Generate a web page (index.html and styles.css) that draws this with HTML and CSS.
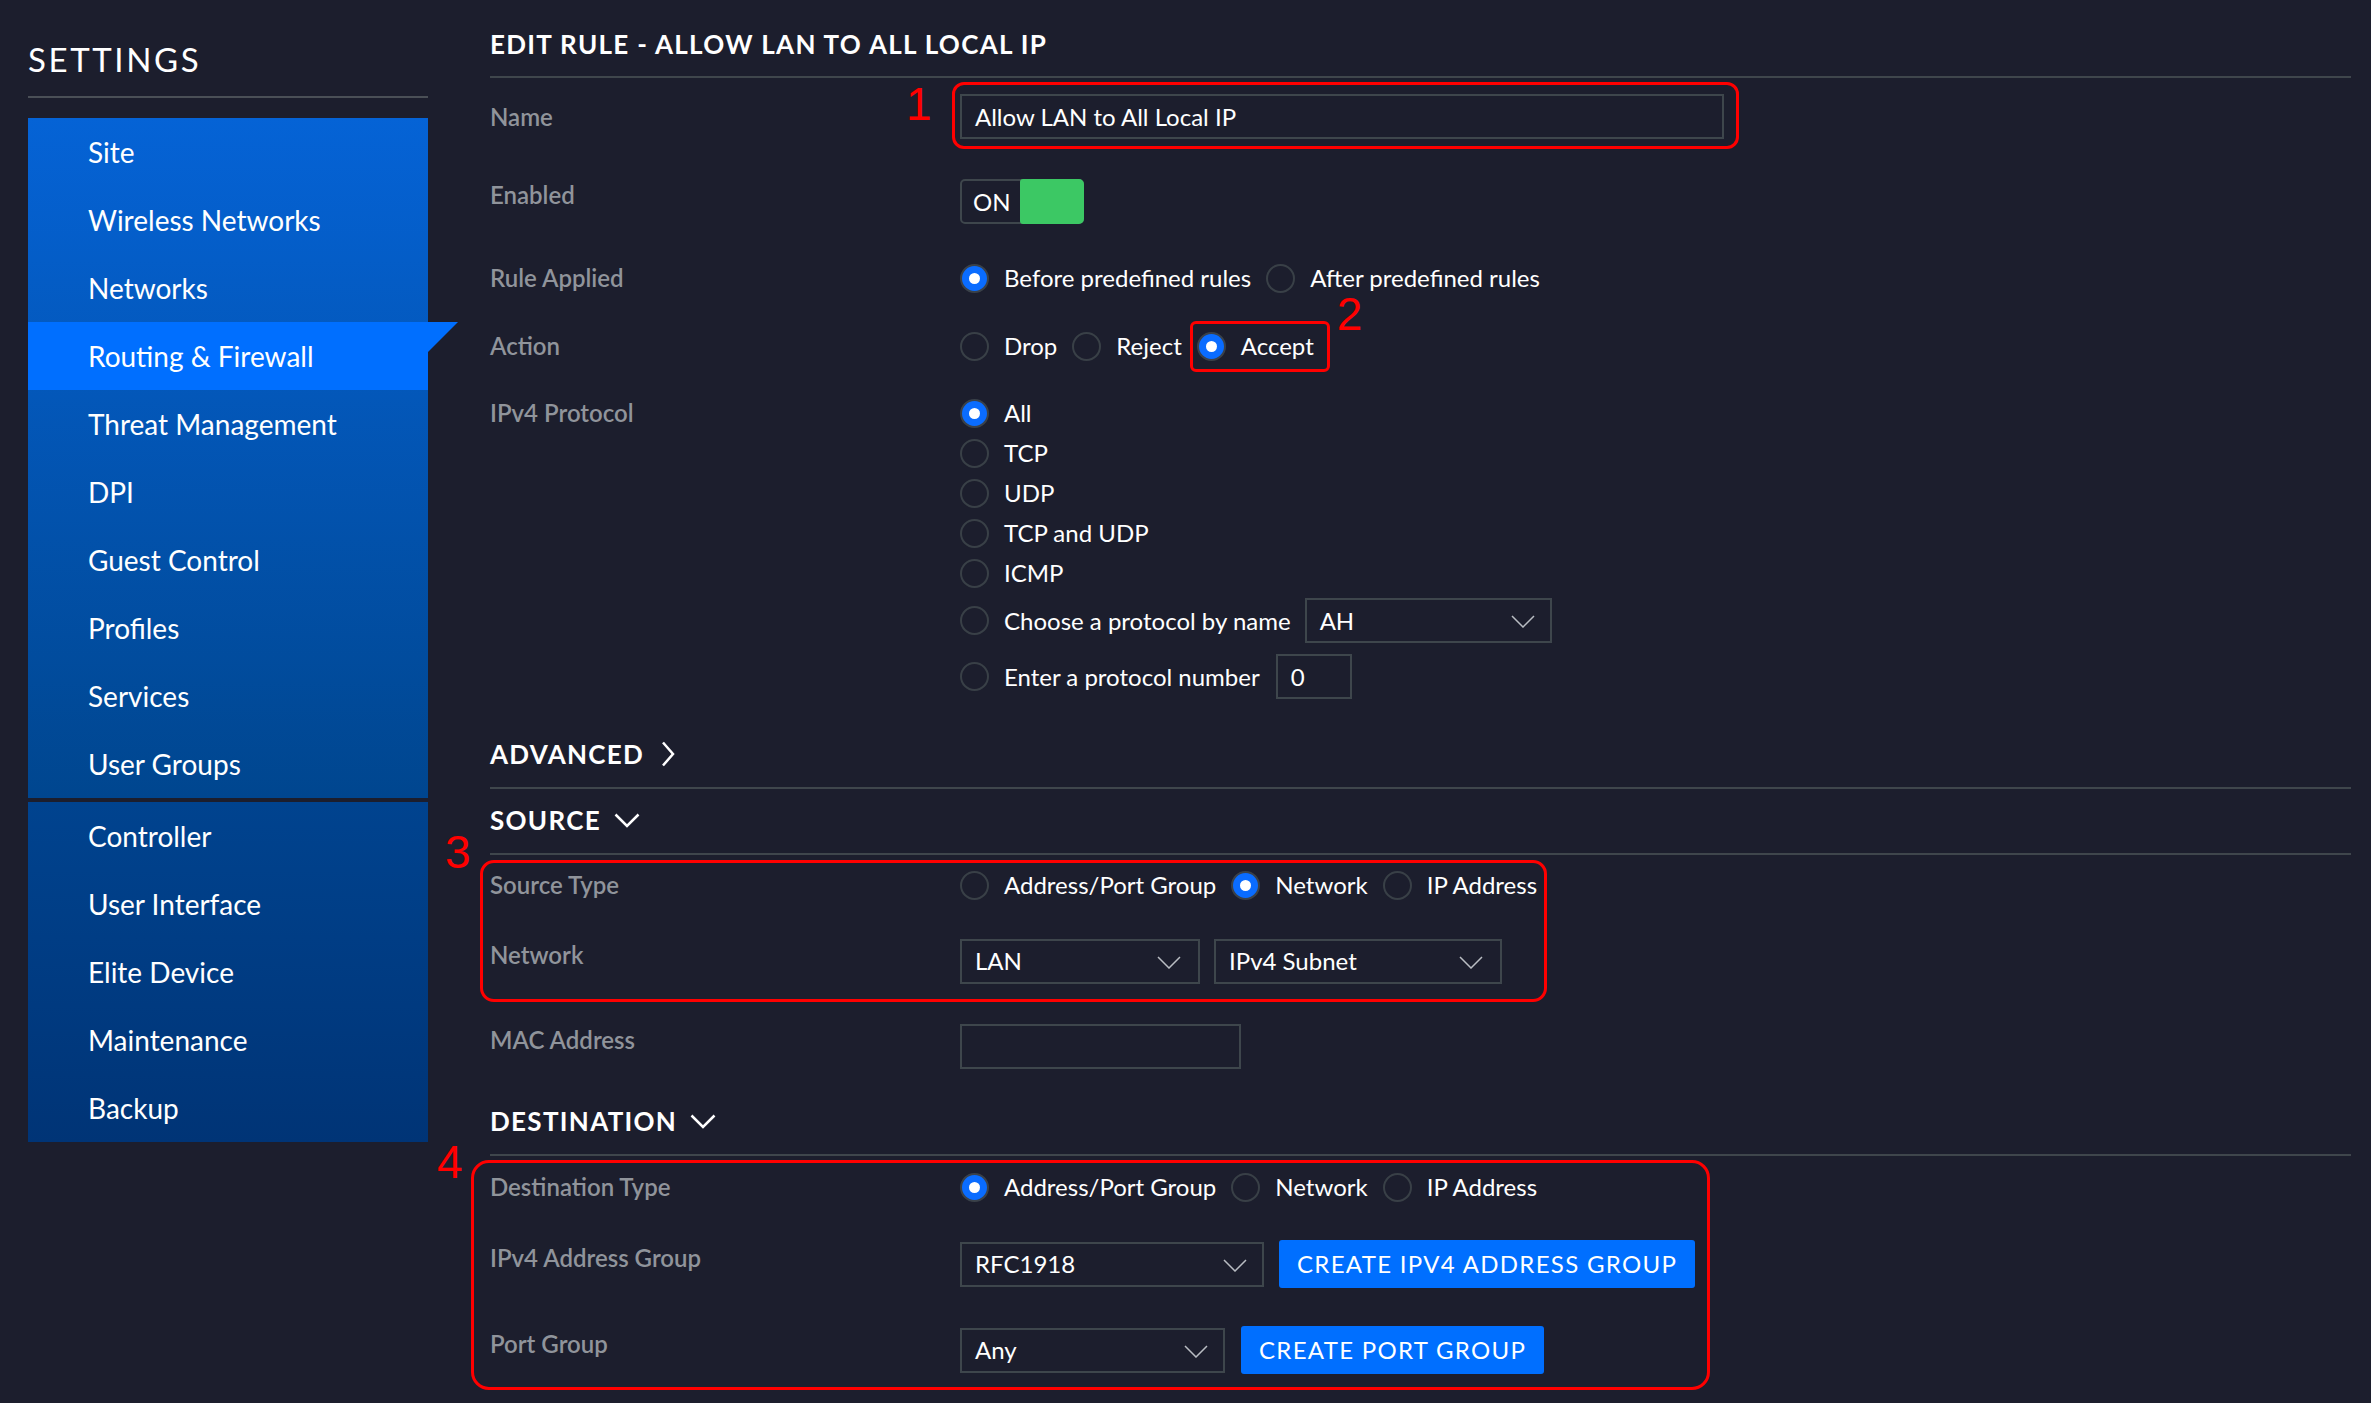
FILE: index.html
```html
<!DOCTYPE html>
<html lang="en">
<head>
<meta charset="utf-8">
<title>Settings - Edit Rule</title>
<link rel="stylesheet" href="styles.css">
</head>
<body>
<div class="app">
  <aside class="sidebar">
    <div class="sidebar-title">SETTINGS</div>
    <nav class="menu">
      <ul class="menu-group group-a">
        <li class="menu-item">Site</li>
        <li class="menu-item">Wireless Networks</li>
        <li class="menu-item">Networks</li>
        <li class="menu-item active">Routing &amp; Firewall</li>
        <li class="menu-item">Threat Management</li>
        <li class="menu-item">DPI</li>
        <li class="menu-item">Guest Control</li>
        <li class="menu-item">Profiles</li>
        <li class="menu-item">Services</li>
        <li class="menu-item">User Groups</li>
      </ul>
      <ul class="menu-group group-b">
        <li class="menu-item">Controller</li>
        <li class="menu-item">User Interface</li>
        <li class="menu-item">Elite Device</li>
        <li class="menu-item">Maintenance</li>
        <li class="menu-item">Backup</li>
      </ul>
    </nav>
  </aside>

  <main class="content">
    <h1 class="page-title">EDIT RULE - ALLOW LAN TO ALL LOCAL IP</h1>

    <div class="row row-name">
      <div class="label">Name</div>
      <div class="control">
        <div class="field field-name anno anno-name">Allow LAN to All Local IP<span class="anno-num num-1">1</span></div>
      </div>
    </div>

    <div class="row row-enabled">
      <div class="label label-lift">Enabled</div>
      <div class="control">
        <div class="toggle"><span class="toggle-text">ON</span><span class="toggle-knob"></span></div>
      </div>
    </div>

    <div class="row row-rule">
      <div class="label">Rule Applied</div>
      <div class="control options">
        <span class="opt"><span class="radio checked"></span>Before predefined rules</span>
        <span class="opt"><span class="radio"></span>After predefined rules</span>
      </div>
    </div>

    <div class="row row-action">
      <div class="label">Action</div>
      <div class="control options">
        <span class="opt"><span class="radio"></span>Drop</span>
        <span class="opt"><span class="radio"></span>Reject</span>
        <span class="opt anno anno-accept"><span class="radio checked"></span>Accept<span class="anno-num num-2">2</span></span>
      </div>
    </div>

    <div class="row row-protocol">
      <div class="label">IPv4 Protocol</div>
      <div class="control proto-list">
        <span class="opt"><span class="radio checked"></span>All</span>
        <span class="opt"><span class="radio"></span>TCP</span>
        <span class="opt"><span class="radio"></span>UDP</span>
        <span class="opt"><span class="radio"></span>TCP and UDP</span>
        <span class="opt"><span class="radio"></span>ICMP</span>
        <div class="proto-line proto-by-name">
          <span class="opt"><span class="radio"></span>Choose a protocol by name</span>
          <div class="select select-ah"><span>AH</span><svg class="chev" width="24" height="13" viewBox="0 0 24 13"><path d="M1 1 L12 12 L23 1" /></svg></div>
        </div>
        <div class="proto-line proto-by-number">
          <span class="opt"><span class="radio"></span>Enter a protocol number</span>
          <div class="field field-num">0</div>
        </div>
      </div>
    </div>

    <div class="section-head head-advanced">ADVANCED<svg class="head-chev" width="18" height="26" viewBox="0 0 18 26"><path d="M6 1.5 L16 13 L6 24.5" /></svg></div>

    <div class="section-head head-source">SOURCE<svg class="head-chev" width="26" height="15" viewBox="0 0 26 15"><path d="M1.5 1.5 L13 13 L24.5 1.5" /></svg></div>

    <div class="anno anno-group anno-source">
      <span class="anno-num num-3">3</span>
      <div class="row">
        <div class="label">Source Type</div>
        <div class="control options">
          <span class="opt"><span class="radio"></span>Address/Port Group</span>
          <span class="opt"><span class="radio checked"></span>Network</span>
          <span class="opt"><span class="radio"></span>IP Address</span>
        </div>
      </div>
      <div class="row row-network">
        <div class="label label-lift">Network</div>
        <div class="control gap-14">
          <div class="select select-lan"><span>LAN</span><svg class="chev" width="24" height="13" viewBox="0 0 24 13"><path d="M1 1 L12 12 L23 1" /></svg></div>
          <div class="select select-subnet"><span>IPv4 Subnet</span><svg class="chev" width="24" height="13" viewBox="0 0 24 13"><path d="M1 1 L12 12 L23 1" /></svg></div>
        </div>
      </div>
    </div>

    <div class="row row-mac">
      <div class="label label-lift">MAC Address</div>
      <div class="control">
        <div class="field field-mac"></div>
      </div>
    </div>

    <div class="section-head head-dest">DESTINATION<svg class="head-chev" width="26" height="15" viewBox="0 0 26 15"><path d="M1.5 1.5 L13 13 L24.5 1.5" /></svg></div>

    <div class="anno anno-group anno-dest">
      <span class="anno-num num-4">4</span>
      <div class="row">
        <div class="label">Destination Type</div>
        <div class="control options">
          <span class="opt"><span class="radio checked"></span>Address/Port Group</span>
          <span class="opt"><span class="radio"></span>Network</span>
          <span class="opt"><span class="radio"></span>IP Address</span>
        </div>
      </div>
      <div class="row row-addr-group">
        <div class="label label-lift">IPv4 Address Group</div>
        <div class="control gap-15">
          <div class="select select-rfc"><span>RFC1918</span><svg class="chev" width="24" height="13" viewBox="0 0 24 13"><path d="M1 1 L12 12 L23 1" /></svg></div>
          <div class="btn">Create IPv4 Address Group</div>
        </div>
      </div>
      <div class="row row-port-group">
        <div class="label label-lift">Port Group</div>
        <div class="control gap-16">
          <div class="select select-any"><span>Any</span><svg class="chev" width="24" height="13" viewBox="0 0 24 13"><path d="M1 1 L12 12 L23 1" /></svg></div>
          <div class="btn">Create Port Group</div>
        </div>
      </div>
    </div>
  </main>
</div>
</body>
</html>
```

FILE: styles.css
```css
* {
  box-sizing: border-box;
}

html,
body {
  margin: 0;
  padding: 0;
}

body {
  width: 2371px;
  height: 1403px;
  overflow: hidden;
  background: #1c1e2d;
  color: #ffffff;
  font-family: Lato, "Noto Sans", "Liberation Sans", sans-serif;
}

.app {
  display: flex;
  align-items: flex-start;
}

/* ---------- Sidebar ---------- */
.sidebar {
  flex: 0 0 400px;
  margin-left: 28px;
  padding-top: 39px;
}

.sidebar-title {
  font-size: 33px;
  line-height: 40px;
  font-weight: 400;
  letter-spacing: 2.6px;
  padding-bottom: 17px;
  border-bottom: 2px solid #4a4f56;
}

.menu {
  margin-top: 20px;
}

.menu-group {
  list-style: none;
  margin: 0;
  padding: 0;
}

.menu-group + .menu-group {
  margin-top: 4px;
}

.group-a {
  background: linear-gradient(180deg, #0563d6 0%, #00468f 100%);
}

.group-b {
  background: linear-gradient(180deg, #00438f 0%, #003476 100%);
}

.menu-item {
  position: relative;
  height: 68px;
  line-height: 68px;
  padding-left: 60px;
  font-size: 28px;
  color: #ffffff;
  white-space: nowrap;
}

.menu-item.active {
  background: #006fff;
}

.menu-item.active::after {
  content: "";
  position: absolute;
  top: 0;
  right: -30px;
  width: 0;
  height: 0;
  border-top: 30px solid #006fff;
  border-right: 30px solid transparent;
}

/* ---------- Main content ---------- */
.content {
  flex: 1;
  margin-left: 62px;
  margin-right: 20px;
  padding-top: 28px;
}

.page-title {
  margin: 0;
  font-size: 26px;
  line-height: 32px;
  font-weight: 700;
  letter-spacing: 1.3px;
  padding-bottom: 16px;
  border-bottom: 2px solid #3f464c;
}

.row {
  display: flex;
  align-items: center;
}

.label {
  flex: 0 0 470px;
  font-size: 24px;
  line-height: 34px;
  font-weight: 600;
  color: #90949b;
  white-space: nowrap;
}

.label-lift {
  margin-bottom: 12px;
}

.control {
  display: flex;
  align-items: center;
  font-size: 24px;
  line-height: 34px;
  color: #ffffff;
  white-space: nowrap;
}

.options {
  gap: 15px;
}

.gap-14 {
  gap: 14px;
}

.gap-15 {
  gap: 15px;
}

.gap-16 {
  gap: 16px;
}

.row-name {
  margin-top: 16px;
}

.row-enabled {
  margin-top: 39px;
}

.row-rule {
  margin-top: 37px;
}

.row-action {
  margin-top: 34px;
}

.row-protocol {
  margin-top: 33px;
  align-items: flex-start;
}

.row-network {
  margin-top: 36px;
}

.row-mac {
  margin-top: 39px;
}

.row-addr-group {
  margin-top: 36px;
}

.row-port-group {
  margin-top: 38px;
}

/* radio option */
.opt {
  display: inline-flex;
  align-items: center;
  gap: 15px;
  height: 34px;
}

.radio {
  flex: 0 0 29px;
  width: 29px;
  height: 29px;
  border-radius: 50%;
  border: 2px solid #394047;
  position: relative;
}

.radio.checked {
  background: #0a6cff;
  border-color: #3a4149;
}

.radio.checked::after {
  content: "";
  position: absolute;
  left: 50%;
  top: 50%;
  width: 11px;
  height: 11px;
  margin: -5.5px 0 0 -5.5px;
  border-radius: 50%;
  background: #ffffff;
}

/* protocol list */
.proto-list {
  flex-direction: column;
  align-items: flex-start;
  gap: 6px;
}

.proto-line {
  display: flex;
  align-items: center;
}

.proto-by-name {
  margin-top: 2px;
  gap: 14px;
}

.proto-by-number {
  margin-top: 5px;
  gap: 16px;
}

/* fields */
.field {
  display: flex;
  align-items: center;
  height: 45px;
  padding: 0 13px;
  border: 2px solid #3e464c;
  font-size: 24px;
  color: #ffffff;
}

.field-name {
  width: 764px;
}

.field-num {
  width: 76px;
}

.field-mac {
  width: 281px;
}

.select {
  display: flex;
  align-items: center;
  justify-content: space-between;
  height: 45px;
  padding: 0 15px 0 13px;
  border: 2px solid #3e464c;
  font-size: 24px;
  color: #ffffff;
}

.select-ah {
  width: 247px;
}

.select-lan {
  width: 240px;
  padding-right: 17px;
}

.select-subnet {
  width: 288px;
  padding-right: 17px;
}

.select-rfc {
  width: 304px;
}

.select-any {
  width: 265px;
}

.chev {
  display: block;
  margin-top: 2px;
}

.chev path {
  fill: none;
  stroke: #b9bdc3;
  stroke-width: 1.5;
}

/* toggle */
.toggle {
  display: flex;
  width: 124px;
  height: 45px;
  border: 2px solid #3e464c;
  border-radius: 5px;
}

.toggle-text {
  flex: 0 0 58px;
  padding-left: 11px;
  line-height: 41px;
  font-size: 24px;
}

.toggle-knob {
  flex: 1;
  margin: -2px -2px -2px 0;
  background: #3cc864;
  border-radius: 3px 5px 5px 3px;
}

/* buttons */
.btn {
  display: inline-flex;
  align-items: center;
  height: 48px;
  padding: 0 18px;
  background: #006fff;
  color: #ffffff;
  border-radius: 3px;
  font-size: 24px;
  letter-spacing: 1.3px;
  text-transform: uppercase;
}

/* section headings */
.section-head {
  display: flex;
  align-items: center;
  gap: 13px;
  font-size: 26px;
  line-height: 32px;
  font-weight: 700;
  letter-spacing: 1.3px;
  padding-bottom: 17px;
  border-bottom: 2px solid #3f464c;
}

.head-chev path {
  fill: none;
  stroke: #ffffff;
  stroke-width: 2.5;
}

.head-advanced {
  margin-top: 39px;
}

.head-source {
  margin-top: 15px;
}

.head-dest {
  margin-top: 36px;
}

/* annotations */
.anno {
  position: relative;
}

.anno::before {
  content: "";
  position: absolute;
  border: 3px solid #ff0000;
  pointer-events: none;
}

.anno-group {
  width: fit-content;
}

.anno-name::before {
  left: -10px;
  top: -14px;
  right: -17px;
  bottom: -12px;
  border-radius: 12px;
}

.anno-accept::before {
  left: -7px;
  top: -8px;
  right: -16px;
  bottom: -9px;
  border-radius: 6px;
}

.anno-source {
  margin-top: 13px;
}

.anno-source::before {
  left: -10px;
  top: -8px;
  right: -10px;
  bottom: -18px;
  border-radius: 14px;
}

.anno-dest {
  margin-top: 14px;
}

.anno-dest::before {
  left: -19px;
  top: -10px;
  right: -15px;
  bottom: -16px;
  border-radius: 18px;
}

.anno-num {
  position: absolute;
  font-family: "Liberation Sans", Arial, sans-serif;
  font-size: 46px;
  line-height: 46px;
  color: #ff0000;
}

.num-1 {
  left: -56px;
  top: -15px;
}

.num-2 {
  left: 140px;
  top: -38px;
}

.num-3 {
  left: -45px;
  top: -39px;
}

.num-4 {
  left: -53px;
  top: -31px;
}
```
